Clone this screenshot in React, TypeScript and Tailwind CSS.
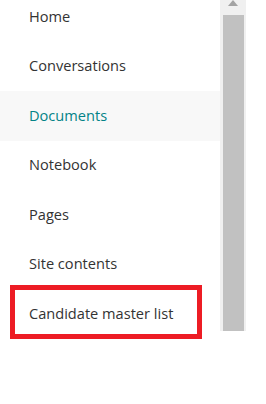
const items = [
  "Home",
  "Conversations",
  "Documents",
  "Notebook",
  "Pages",
  "Site contents",
  "Candidate master list",
];

export default function App() {
  return (
    <div className="flex h-[404px] w-[266px] overflow-hidden bg-white font-['Open_Sans',sans-serif] text-[14.6px]">
      <nav className="-mt-[8px] flex w-[220px] flex-col">
        {items.map((item) => {
          const active = item === "Documents";
          const flagged = item === "Candidate master list";
          return (
            <div
              key={item}
              className={`relative flex h-[49.5px] shrink-0 items-center pl-[29px] ${
                active ? "bg-[#f8f8f8] text-[#038387]" : "text-[#333333]"
              }`}
            >
              {item}
              {flagged && (
                <span className="absolute left-[10px] top-[-4px] h-[54px] w-[192px] border-[5px] border-[#ed1c24]" />
              )}
            </div>
          );
        })}
      </nav>
      <div className="flex h-[331px] w-[26px] flex-col items-center bg-[#f0f0f0]">
        <div className="flex h-[15px] w-full items-start justify-center">
          <svg width="12" height="6" viewBox="0 0 12 6">
            <polygon points="1,6 11,6 6,0" fill="#a3a3a3" />
          </svg>
        </div>
        <div className="w-[21px] flex-1 bg-[#c1c1c1]" />
      </div>
    </div>
  );
}
